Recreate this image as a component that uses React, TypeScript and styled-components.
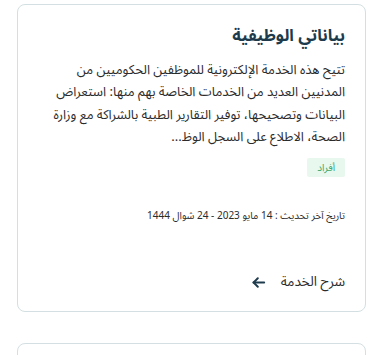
import React from "react";
import styled, { createGlobalStyle } from "styled-components";

const Global = createGlobalStyle`
  html, body { margin: 0; padding: 0; background: #ffffff; }
  body { font-family: "Noto Sans Arabic", "DejaVu Sans", sans-serif; }
`;

const Page = styled.div`
  direction: rtl;
  display: flex;
  flex-direction: column;
  gap: 31px;
  padding: 4px 17px 0 17px;
`;

const Card = styled.article`
  border: 1px solid #d3dfe2;
  border-radius: 8px;
  background: #fff;
  padding: 16px 20px 18px 20px;
  display: flex;
  flex-direction: column;
  min-height: 308px;
  box-sizing: border-box;
`;

const Title = styled.h2`
  margin: 0;
  font-size: 16.5px;
  font-weight: 700;
  color: #1d3b4c;
  line-height: 30px;
`;

const Body = styled.p`
  margin: 8px 0 0 0;
  font-size: 13px;
  line-height: 22.3px;
  color: #2b2b2b;
`;

const Tag = styled.span<{ $tone: string; $bg: string }>`
  align-self: flex-start;
  margin-top: 10px;
  padding: 0 10px;
  font-size: 10px;
  line-height: 19px;
  color: ${(p) => p.$tone};
  background: ${(p) => p.$bg};
  border-radius: 2px;
`;

const DateLine = styled.div`
  margin-top: 30px;
  font-size: 10px;
  line-height: 18px;
  color: #2b2b2b;
`;

const Link = styled.a`
  margin-top: 46px;
  display: flex;
  align-items: center;
  gap: 14px;
  font-size: 13.5px;
  line-height: 22px;
  color: #2b2b2b;
  text-decoration: none;
`;

const Arrow = styled.svg`
  width: 17px;
  height: 17px;
`;

export default function App() {
  return (
    <>
      <Global />
      <Page>
        <Card>
          <Title>بياناتي الوظيفية</Title>
          <Body>
            تتيح هذه الخدمة الإلكترونية للموظفين الحكوميين من المدنيين العديد من الخدمات الخاصة بهم منها: استعراض البيانات وتصحيحها، توفير التقارير الطبية بالشراكة مع وزارة الصحة، الاطلاع على السجل الوظ...
          </Body>
          <Tag $tone="#3aa66b" $bg="#e9f8ef">أفراد</Tag>
          <DateLine>تاريخ آخر تحديث : 14 مايو 2023 - 24 شوال 1444</DateLine>
          <Link href="#">
            شرح الخدمة
            <Arrow viewBox="0 0 24 24" fill="none" stroke="#1d3b4c" strokeWidth="2.8" strokeLinecap="round" strokeLinejoin="round">
              <path d="M20 12H5" />
              <path d="M11 6l-6 6 6 6" />
            </Arrow>
          </Link>
        </Card>
        <Card />
      </Page>
    </>
  );
}
